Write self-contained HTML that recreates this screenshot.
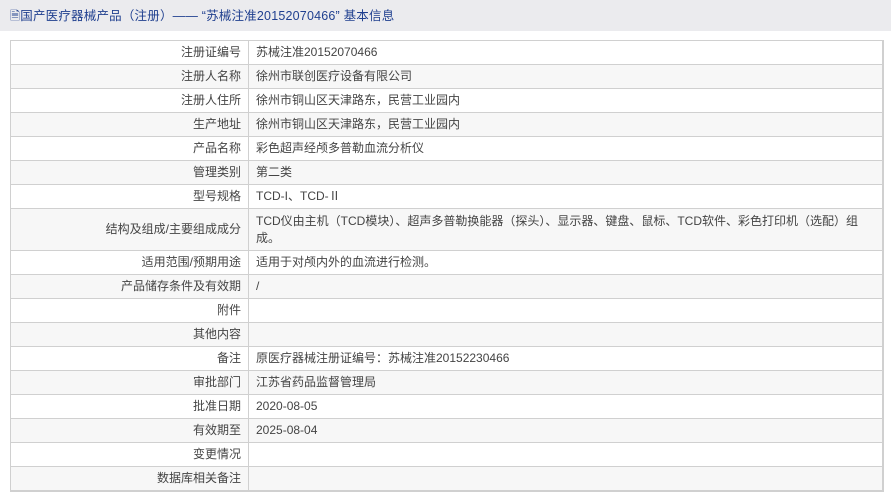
<!DOCTYPE html>
<html><head><meta charset="utf-8"><style>
body{margin:0;width:891px;height:498px;background:#fff;font-family:"Liberation Sans","Noto Sans CJK SC",sans-serif;font-size:12px;color:#444;overflow:hidden}
.hd{height:31px;background:#ebebee;line-height:32px;padding-left:10px;font-size:12.5px;color:#1f3f8f;letter-spacing:0.2px}
table{position:absolute;left:10px;top:40px;width:874px;border-collapse:collapse;border:2px solid #d0d0d0;border-left:1px solid #d0d0d0;border-top:1px solid #d0d0d0}
td{border:1px solid #d0d0d0;height:23px;padding:0 7px;line-height:17px}
td.l{width:223px;text-align:right;}
tr:nth-child(even){background:#f7f7f7}
</style></head><body>
<div class="hd">🗎国产医疗器械产品（注册）—— “苏械注准20152070466” 基本信息</div>
<table>
<tr><td class="l">注册证编号</td><td>苏械注准20152070466</td></tr>
<tr><td class="l">注册人名称</td><td>徐州市联创医疗设备有限公司</td></tr>
<tr><td class="l">注册人住所</td><td>徐州市铜山区天津路东，民营工业园内</td></tr>
<tr><td class="l">生产地址</td><td>徐州市铜山区天津路东，民营工业园内</td></tr>
<tr><td class="l">产品名称</td><td>彩色超声经颅多普勒血流分析仪</td></tr>
<tr><td class="l">管理类别</td><td>第二类</td></tr>
<tr><td class="l">型号规格</td><td>TCD-I、TCD-Ⅱ</td></tr>
<tr><td class="l" style="height:41px">结构及组成/主要组成成分</td><td>TCD仪由主机（TCD模块）、超声多普勒换能器（探头）、显示器、键盘、鼠标、TCD软件、彩色打印机（选配）组成。</td></tr>
<tr><td class="l">适用范围/预期用途</td><td>适用于对颅内外的血流进行检测。</td></tr>
<tr><td class="l">产品储存条件及有效期</td><td>/</td></tr>
<tr><td class="l">附件</td><td></td></tr>
<tr><td class="l">其他内容</td><td></td></tr>
<tr><td class="l">备注</td><td>原医疗器械注册证编号：苏械注准20152230466</td></tr>
<tr><td class="l">审批部门</td><td>江苏省药品监督管理局</td></tr>
<tr><td class="l">批准日期</td><td>2020-08-05</td></tr>
<tr><td class="l">有效期至</td><td>2025-08-04</td></tr>
<tr><td class="l">变更情况</td><td></td></tr>
<tr><td class="l">数据库相关备注</td><td></td></tr>
</table>
</body></html>
